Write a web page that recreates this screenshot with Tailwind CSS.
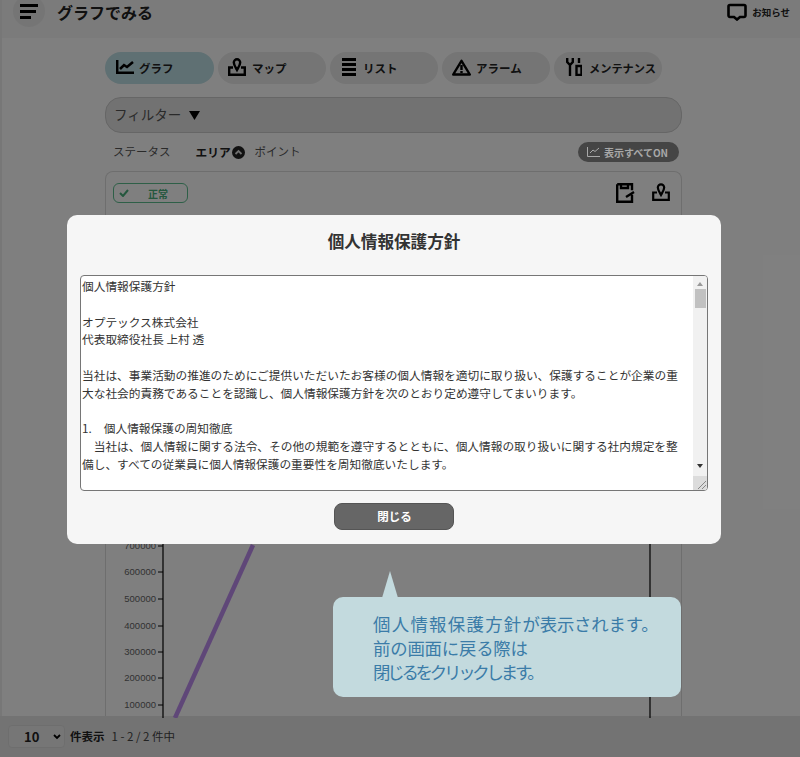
<!DOCTYPE html>
<html lang="ja"><head><meta charset="utf-8"><title>個人情報保護方針</title>
<script src="https://cdn.jsdelivr.net/npm/@tailwindcss/browser@4"></script></head>
<body class="m-0">
<div class="relative w-[800px] h-[757px] overflow-hidden bg-white text-[#222] font-['Noto_Sans_CJK_JP','Noto_Sans',sans-serif]">
  <div class="flex flex-col h-full">
    <header class="h-[38px] shrink-0 bg-[#f6f6f6] border-l-2 border-[#eee] flex items-start relative">
      <div class="w-8 h-8 rounded-full bg-[#ebebeb] ml-[11px] mt-[-5px] flex flex-col justify-center gap-[3px] pl-[7px]">
        <span class="block w-[18px] h-[3px] bg-black"></span><span class="block w-4 h-[3px] bg-black"></span><span class="block w-[11px] h-[3px] bg-black"></span>
      </div>
      <h1 class="ml-3 text-[16px] leading-6 font-bold">グラフでみる</h1>
      <div class="ml-auto mr-[10px] mt-[3px] flex items-center gap-[5px]">
        <svg class="w-[20px] h-[18px]" viewBox="0 0 20 18" fill="none" stroke="#000" stroke-width="2.600"><path d="M3 2h14a1.500 1.500 0 0 1 1.500 1.500v9A1.500 1.500 0 0 1 17 14h-4l-3 2.500L7 14H3a1.500 1.500 0 0 1-1.500-1.500v-9A1.500 1.500 0 0 1 3 2z"/></svg>
        <span class="text-[9.500px] font-bold">お知らせ</span>
      </div>
    </header>
    <main class="flex-1 min-h-0 border-l-2 border-[#eee] pl-[103px] pr-[118px] pt-[14px] flex flex-col">
      <nav class="flex gap-1 text-[11.500px] font-bold leading-none">
        <a class="w-[109px] h-8 rounded-2xl bg-[#bfe0e6] flex items-center pl-[11px] gap-[5px]"><svg class="w-[18px] h-[14px] mt-[-2px]" viewBox="0 0 18 14" fill="none" stroke="#000" stroke-width="2.500"><path d="M1.200 0v12.700H18M4 9l4-4 3 2 6-5"/></svg><span class="pt-[2px]">グラフ</span></a>
        <a class="w-[108px] h-8 rounded-2xl bg-[#ebebeb] flex items-center pl-[10px] gap-[6px]"><svg class="w-[18px] h-[18px] mt-[-2px]" viewBox="0 0 18 18" fill="none" stroke="#000" stroke-width="2.400"><path d="M5 9.500H1.200v7.300h15.600V9.500H13"/><path d="M9 12C7 8.500 5.800 6.800 5.800 4.500a3.200 3.200 0 0 1 6.400 0C12.200 6.800 11 8.500 9 12z"/></svg><span class="pt-[2px]">マップ</span></a>
        <a class="w-[108px] h-8 rounded-2xl bg-[#ebebeb] flex items-center pl-3 gap-[7px]"><svg class="w-[14px] h-[18px] mt-[-2px]" viewBox="0 0 14 18" fill="#000"><path d="M0 0h14v3H0zM0 5h14v3H0zM0 10h14v3H0zM0 15h14v3H0z"/></svg><span class="pt-[2px]">リスト</span></a>
        <a class="w-[108px] h-8 rounded-2xl bg-[#ebebeb] flex items-center pl-[10px] gap-[5px]"><svg class="w-[19px] h-[17px] mt-[-2px]" viewBox="0 0 19 17" fill="none" stroke="#000" stroke-width="2.400"><path d="M9.500 1.800 17.800 15.500H1.200z" stroke-linejoin="round"/><path d="M9.500 6v5M9.500 12v2"/></svg><span class="pt-[2px]">アラーム</span></a>
        <a class="w-[108px] h-8 rounded-2xl bg-[#ebebeb] flex items-center pl-3 gap-[7px]"><svg class="w-[16px] h-[18px] mt-[-2px] shrink-0" viewBox="0 0 16 18" fill="none" stroke="#000" stroke-width="2.400"><path d="M1.200 0v4l2.800 3 2.800-3V0M4 7v11"/><path d="M13 0v5M10.500 8h5v9h-5z"/></svg><span class="pt-[2px] text-[11.200px] whitespace-nowrap">メンテナンス</span></a>
      </nav>
      <div class="mt-[13px] h-9 shrink-0 rounded-2xl border border-[#ccc] bg-[#e4e4e4] flex items-center pl-2 gap-2 text-[13.500px] text-[#555]"><span class="pb-[2px]">フィルター</span><svg class="w-[11px] h-[9px]" viewBox="0 0 11 9" fill="#000"><path d="M0 0h11L5.500 9z"/></svg></div>
      <div class="h-[38px] shrink-0 flex items-center pl-2 text-[11.500px] text-[#555]">
        <span>ステータス</span><span class="ml-[25px] text-[11.700px] font-bold text-[#222]">エリア</span>
        <svg class="w-[13px] h-[13px] ml-px" viewBox="0 0 13 13"><circle cx="6.500" cy="6.500" r="6.500" fill="#222"/><path d="M3.500 8 6.500 5l3 3" fill="none" stroke="#ddd" stroke-width="1.800"/></svg>
        <span class="ml-[10px]">ポイント</span>
        <span class="relative z-10 ml-auto mr-[3px] w-[101px] h-5 rounded-[10px] bg-[#454545] flex items-center pl-[9px] gap-[4px] text-[10px] font-bold text-[#a8a8a8] whitespace-nowrap"><svg class="w-[13px] h-[10px]" viewBox="0 0 13 10" fill="none" stroke="#a8a8a8" stroke-width="1"><path d="M.5 0v9.500H13M3 6l3-3 2 1.500L12 1"/></svg>表示すべてON</span>
      </div>
      <section class="relative flex-1 min-h-0 rounded-t-lg border border-b-0 border-[#ddd] bg-white">
        <div class="flex items-start px-[7px] pt-[11px]">
          <span class="w-[75px] h-5 rounded-md border border-[#5cbf8f] bg-white flex items-center pl-[5px] text-[10px] font-bold text-[#4aaf7d]"><svg class="w-[10px] h-2" viewBox="0 0 10 8" fill="none" stroke="#4aaf7d" stroke-width="2"><path d="M1 4l3 3 5-6"/></svg><span class="ml-[19px]">正常</span></span>
          <svg class="ml-auto w-[19px] h-5" viewBox="0 0 19 20" fill="none" stroke="#000" stroke-width="2.400"><path d="M1.200 1.200h14.800v6M1.200 1.200v17.600h14.800v-7M5 1v4h7V1M10 14l8-5"/></svg>
          <svg class="ml-[17px] mr-[4px] w-[18px] h-[18px]" viewBox="0 0 18 18" fill="none" stroke="#000" stroke-width="2.200"><path d="M5 9.500H1.200v7.300h15.600V9.500H13"/><path d="M9 12C7 8.500 5.800 6.800 5.800 4.500a3.200 3.200 0 0 1 6.400 0C12.200 6.800 11 8.500 9 12z"/></svg>
        </div>
        <span class="absolute left-[21px] top-[40px] text-[10px] font-bold">項目</span>
        <svg class="absolute left-0 top-[340px] w-[575px] h-[206px]" viewBox="0 0 575 206" font-family="Liberation Sans, sans-serif" font-size="9.500" fill="#666" text-anchor="end">
          <path d="M57 0V206M544 0V206" stroke="#000" stroke-width="1.200" fill="none"/>
          <path d="M52 34h5M52 60h5M52 87h5M52 114h5M52 140h5M52 166h5M52 193h5" stroke="#000"/>
          <path d="M147 33 69 206" stroke="#bf8ff0" stroke-width="4.500" fill="none"/>
          <text x="50" y="37">700000</text><text x="50" y="63">600000</text><text x="50" y="90">500000</text><text x="50" y="117">400000</text><text x="50" y="143">300000</text><text x="50" y="169">200000</text><text x="50" y="196">100000</text>
        </svg>
      </section>
    </main>
    <footer class="h-[41px] shrink-0 bg-[#e6e6e6] flex items-center pl-2">
      <div class="w-[57px] h-[23px] rounded bg-[#ededed] border border-[#ddd] flex items-center justify-between pl-[15px] pr-[3px] text-[13px] font-bold">10<svg class="w-2 h-[6px]" viewBox="0 0 8 6" fill="none" stroke="#000" stroke-width="1.800"><path d="M1 1l3 3 3-3"/></svg></div>
      <span class="ml-[5px] text-[11.500px] font-bold">件表示</span><span class="ml-[7px] text-[11.500px] text-[#444]">1 - 2 / 2 件中</span>
    </footer>
  </div>
  <div class="absolute inset-0 bg-black/50"></div>
  <div class="absolute left-[67px] top-[215px] w-[654px] h-[329px] rounded-[10px] bg-[#f6f6f6] flex flex-col px-[13px]">
    <h2 class="h-[60px] shrink-0 flex items-center justify-center pb-[7px] text-[16.600px] font-bold text-[#333]">個人情報保護方針</h2>
    <div class="relative h-[216px] shrink-0 rounded-sm border border-[#767676] bg-white overflow-hidden pl-px pt-px pr-[14px] text-[11.700px] leading-[17.800px] text-[#333]">
      <p class="whitespace-nowrap">個人情報保護方針<br><br>オプテックス株式会社<br>代表取締役社長 上村 透<br><br>当社は、事業活動の推進のためにご提供いただいたお客様の個人情報を適切に取り扱い、保護することが企業の重<br>大な社会的責務であることを認識し、個人情報保護方針を次のとおり定め遵守してまいります。<br><br>1.<span class="ml-[12px]">個人情報保護の周知徹底</span><br>　当社は、個人情報に関する法令、その他の規範を遵守するとともに、個人情報の取り扱いに関する社内規定を整<br>備し、すべての従業員に個人情報保護の重要性を周知徹底いたします。</p>
      <div class="absolute right-0 top-0 bottom-0 w-[14px] bg-[#f1f1f1] flex flex-col items-center">
        <svg class="w-[6px] h-1 mt-[6px] shrink-0" viewBox="0 0 6 4" fill="#999"><path d="M3 0l3 4H0z"/></svg>
        <div class="w-[11px] h-[19px] bg-[#c1c1c1] mt-[3px]"></div>
        <svg class="w-[6px] h-1 mt-[156px] shrink-0" viewBox="0 0 6 4" fill="#333"><path d="M0 0h6L3 4z"/></svg>
        <div class="absolute right-0 bottom-0 w-[14px] h-[14px] bg-[#dcdcdc]"><svg class="w-[14px] h-[14px]" viewBox="0 0 14 14" stroke="#888" fill="none"><path d="M5 13l8-8M9 13l4-4"/></svg></div>
      </div>
    </div>
    <div class="mt-3 flex justify-center">
      <button class="w-[120px] h-[27px] rounded-lg border border-[#555] bg-[#666] text-white text-[11.500px] font-bold pl-px">閉じる</button>
    </div>
  </div>
  <div class="absolute left-[333px] top-[571px] w-[348px] h-[126px]">
    <svg class="block w-4 h-[27px] ml-[49px] mb-[-1px]" viewBox="0 0 16 27" fill="#c3dade"><path d="M8 0l8 27H0z"/></svg>
    <div class="h-[100px] rounded-[10px] bg-[#c3dade] pl-10 pt-[15px] text-[17.400px] leading-6 text-[#3b7ca8] whitespace-nowrap"><span class="tracking-[1.300px]">個人情報保護方針</span><span class="tracking-[-0.200px]">が表示されます。</span><br><span class="tracking-[-0.200px]">前の画面に戻る際は</span><br><span class="tracking-[-3.200px]">閉じるをクリックします。</span></div>
  </div>
</div>
</body></html>
